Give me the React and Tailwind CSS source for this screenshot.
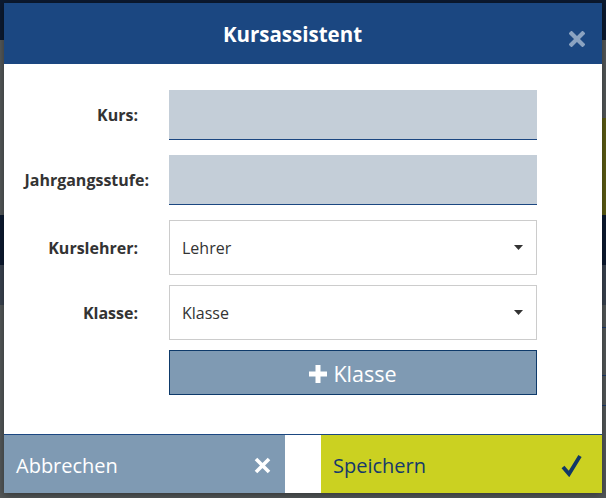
import React from 'react';

const font = { fontFamily: '"Open Sans", "Noto Sans", sans-serif' };

const Caret = () => (
  <svg width="9" height="5" viewBox="0 0 9 5" className="shrink-0">
    <path d="M0 0h9L4.5 5z" fill="#333" />
  </svg>
);

const FieldRow = ({ label, labelClass = '', children }) => (
  <div className="flex items-center">
    <div className="w-[134px] shrink-0 flex justify-end">
      <label className={`whitespace-nowrap text-[16px] font-bold text-[#333] ${labelClass}`}>
        {label}
      </label>
    </div>
    <div className="ml-[31px] w-[368px] shrink-0">{children}</div>
  </div>
);

const TextInput = () => (
  <div className="h-[50px] bg-[#c4ced8] border-b border-[#1b4781]" />
);

const Select = ({ placeholder }) => (
  <div className="h-[55px] bg-white border border-[#cccccc] flex items-center justify-between pl-[12px] pr-[13px] text-[16px] text-[#333]">
    <span>{placeholder}</span>
    <Caret />
  </div>
);

export default function App() {
  return (
    <div className="relative w-[606px] h-[498px] overflow-hidden bg-[#545859]" style={font}>
      {/* dimmed page behind the dialog */}
      <div className="flex flex-col h-full">
        <div className="h-[40px] bg-[#0c1a30]" />
        <div className="h-[78px] bg-[#545859]" />
        <div className="h-[97px] flex">
          <div className="flex-1 bg-[#545859]" />
          <div className="w-[40px] bg-[#5d5d14]" />
        </div>
        <div className="h-[50px] bg-[#0c1a30]" />
        <div className="h-[40px] bg-[#3a4350]" />
        <div className="flex-1 bg-[#545859] flex flex-col items-end">
          <div className="mt-[22px] h-[1px] w-[8px] bg-[#1b3a6b]" />
          <div className="mt-[47px] h-[1px] w-[8px] bg-[#1b3a6b]" />
          <div className="mt-[29px] h-[1px] w-[8px] bg-[#1b3a6b]" />
        </div>
      </div>

      {/* dialog */}
      <div className="absolute left-[4px] top-[3px] w-[598px] shadow-[0_2px_8px_rgba(0,0,0,0.4)]">
        <div className="relative h-[61px] bg-[#1b4781] flex items-center justify-center">
          <h2 className="pr-[21px] pt-[1px] text-[20.5px] font-bold text-white">Kursassistent</h2>
          <button className="absolute right-[17px] top-[28px]" aria-label="Schließen">
            <svg width="16" height="16" viewBox="0 0 16 16">
              <path d="M2.5 2.5l11 11M13.5 2.5l-11 11" stroke="#8ba3c1" strokeWidth="4.2" strokeLinecap="square" />
            </svg>
          </button>
        </div>

        <div className="bg-white pt-[26px] pb-[39px] flex flex-col">
          <FieldRow label="Kurs:">
            <TextInput />
          </FieldRow>
          <div className="mt-[15px]">
            <FieldRow label="Jahrgangsstufe:" labelClass="-mr-[11px]">
              <TextInput />
            </FieldRow>
          </div>
          <div className="mt-[15px]">
            <FieldRow label="Kurslehrer:">
              <Select placeholder="Lehrer" />
            </FieldRow>
          </div>
          <div className="mt-[10px]">
            <FieldRow label="Klasse:">
              <Select placeholder="Klasse" />
            </FieldRow>
          </div>
          <div className="mt-[10px] ml-[165px] w-[368px]">
            <button className="w-full h-[45px] bg-[#7f9ab3] border border-[#0e3a6a] flex items-center justify-center gap-[6px] text-white text-[21.5px]">
              <svg width="18" height="18" viewBox="0 0 18 18" className="mt-[3px]">
                <path d="M9 0v18M0 9h18" stroke="#fff" strokeWidth="5" />
              </svg>
              <span className="pt-[3px]">Klasse</span>
            </button>
          </div>
        </div>

        <div className="h-[59px] border-t border-[#1b4781] flex bg-white">
          <button className="w-[281px] bg-[#7f9ab3] flex items-center justify-between pl-[12px] pr-[14px] pt-[3px] text-white text-[20px]">
            <span>Abbrechen</span>
            <svg width="17" height="17" viewBox="0 0 17 17">
              <path d="M2 2l13 13M15 2L2 15" stroke="#fff" strokeWidth="3.6" />
            </svg>
          </button>
          <div className="w-[36px]" />
          <button className="w-[281px] bg-[#cbd121] flex items-center justify-between pl-[12px] pr-[20px] pt-[3px] text-[#16396b] text-[20px]">
            <span>Speichern</span>
            <svg width="21" height="23" viewBox="0 0 21 23">
              <path d="M2 13l6 7L19 2" fill="none" stroke="#103767" strokeWidth="3.8" strokeLinejoin="miter" />
            </svg>
          </button>
        </div>
      </div>
    </div>
  );
}
